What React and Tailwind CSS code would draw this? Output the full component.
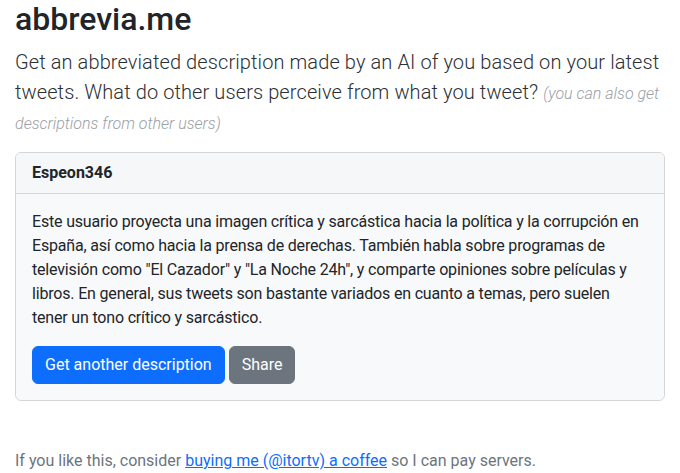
export default function App() {
  return (
    <div className="min-h-[473px] bg-white px-[15px] font-[family-name:Roboto,'Liberation_Sans',sans-serif] text-[#212529]">
      <h1 className="text-[32px] font-medium leading-[38px]">abbrevia.me</h1>
      <p className="mt-[9px] text-[20px] font-light leading-[30px] tracking-[0.1px] text-[#2c3034]">
        Get an abbreviated description made by an AI of you based on your latest tweets. What do other users perceive from what you tweet?{' '}
        <span className="text-[16px] italic leading-[24px] tracking-normal text-[#9aa0a6]">(you can also get descriptions from other users)</span>
      </p>
      <div className="mt-[15px] overflow-hidden rounded-[6px] border border-[#d4d6d8] bg-[#f8f9fa]">
        <div className="border-b border-[#d4d6d8] bg-[#f6f7f8] px-[16px] py-[8px] text-[16px] font-bold leading-[24px]">Espeon346</div>
        <div className="p-[16px]">
          <p className="text-[16px] leading-[24px] tracking-[-0.18px]">
            Este usuario proyecta una imagen crítica y sarcástica hacia la política y la corrupción en España, así como hacia la prensa de derechas. También habla sobre programas de televisión como "El Cazador" y "La Noche 24h", y comparte opiniones sobre películas y libros. En general, sus tweets son bastante variados en cuanto a temas, pero suelen tener un tono crítico y sarcástico.
          </p>
          <div className="mt-[16px] flex gap-[4px]">
            <button className="rounded-[6px] border border-[#0d6efd] bg-[#0d6efd] px-[12px] py-[6px] text-[16px] leading-[24px] text-white">Get another description</button>
            <button className="rounded-[6px] border border-[#6c757d] bg-[#6c757d] px-[12px] py-[6px] text-[16px] leading-[24px] text-white">Share</button>
          </div>
        </div>
      </div>
      <p className="mt-[48px] text-[16px] leading-[24px] text-[#6c757d]">
        If you like this, consider{' '}
        <a href="#" className="text-[#0d6efd] underline">buying me (@itortv) a coffee</a>{' '}
        so I can pay servers.
      </p>
    </div>
  );
}
